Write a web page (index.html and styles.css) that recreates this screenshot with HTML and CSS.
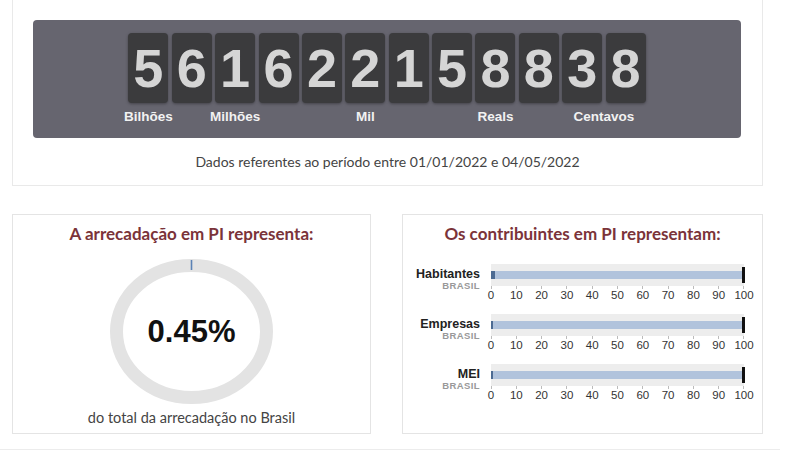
FILE: index.html
```html
<!DOCTYPE html>
<html lang="pt-BR">
<head>
    <meta charset="UTF-8">
    <meta name="viewport" content="width=device-width, initial-scale=1.0">
    <title>Arrecadação em PI</title>
    <link rel="stylesheet" href="styles.css">
</head>
<body>
    <div class="page">
        <section class="summary">
            <div class="counter">
                <div class="group">
                    <div class="tiles"><span class="tile">5</span></div>
                    <span class="unit">Bilhões</span>
                </div>
                <div class="group">
                    <div class="tiles"><span class="tile">6</span><span class="tile">1</span><span class="tile">6</span></div>
                    <span class="unit">Milhões</span>
                </div>
                <div class="group">
                    <div class="tiles"><span class="tile">2</span><span class="tile">2</span><span class="tile">1</span></div>
                    <span class="unit">Mil</span>
                </div>
                <div class="group">
                    <div class="tiles"><span class="tile">5</span><span class="tile">8</span><span class="tile">8</span></div>
                    <span class="unit">Reals</span>
                </div>
                <div class="group">
                    <div class="tiles"><span class="tile">3</span><span class="tile">8</span></div>
                    <span class="unit">Centavos</span>
                </div>
            </div>
            <p class="period">Dados referentes ao período entre 01/01/2022 e 04/05/2022</p>
        </section>

        <div class="cards">
            <section class="card">
                <h2 class="card-title">A arrecadação em PI representa:</h2>
                <div class="donut">
                    <svg class="donut-ring" viewBox="0 0 165 145" preserveAspectRatio="none">
                        <ellipse cx="82.5" cy="72.5" rx="75" ry="66" fill="none" stroke="#e3e3e3" stroke-width="13"/>
                        <line x1="82.5" y1="1" x2="82.5" y2="11" stroke="#5b82b5" stroke-width="1.6"/>
                    </svg>
                    <span class="donut-value">0.45%</span>
                </div>
                <p class="donut-caption">do total da arrecadação no Brasil</p>
            </section>

            <section class="card">
                <h2 class="card-title">Os contribuintes em PI representam:</h2>
                <div class="bullets" id="bullets"></div>
            </section>
        </div>
        <div class="rule"></div>
    </div>

    <script>
        const rows = [
            { nome: 'Habitantes', valor: 1.5 },
            { nome: 'Empresas', valor: 0.8 },
            { nome: 'MEI', valor: 0.8 }
        ];

        const container = document.getElementById('bullets');
        rows.forEach(function(row) {
            let ticks = '';
            for (let i = 0; i <= 100; i += 10) {
                ticks += '<div class="tick"><i></i><span>' + i + '</span></div>';
            }
            container.innerHTML +=
                '<div class="bullet">' +
                    '<div class="bullet-label"><strong>' + row.nome + '</strong><small>BRASIL</small></div>' +
                    '<div class="bullet-chart">' +
                        '<div class="band"><div class="bar"><div class="measure" style="width:' + row.valor + '%"></div></div><div class="target"></div></div>' +
                        '<div class="axis">' + ticks + '</div>' +
                    '</div>' +
                '</div>';
        });
    </script>
</body>
</html>
```

FILE: styles.css
```css
body {
    margin: 0;
    background-color: #fff;
    font-family: Lato, "Open Sans", sans-serif;
    color: #444;
}
.page {
    width: 780px;
}
.summary {
    margin-left: 12px;
    width: 749px;
    border: 1px solid #e9e9e9;
    border-top: none;
    padding-top: 20px;
}
.counter {
    margin: 0 21px 0 20px;
    height: 118px;
    box-sizing: border-box;
    padding-top: 13px;
    background-color: #66656f;
    border-radius: 4px;
    display: flex;
    justify-content: center;
    gap: 3.4px;
}
.group {
    display: flex;
    flex-direction: column;
    align-items: center;
}
.tiles {
    display: flex;
    gap: 3.4px;
}
.tile {
    width: 40px;
    height: 70px;
    background-color: #3b3b3d;
    border-radius: 4px;
    box-shadow: 0 1px 3px rgba(0, 0, 0, 0.35);
    color: #d5d5d5;
    font-family: "Liberation Sans", Arial, sans-serif;
    font-weight: bold;
    font-size: 54px;
    line-height: 70px;
    text-align: center;
}
/* o rótulo pode ser mais largo que o grupo sem afastar os dígitos */
.unit {
    width: 0;
    margin-top: 6px;
    display: flex;
    justify-content: center;
    font-family: "Liberation Sans", Arial, sans-serif;
    font-weight: bold;
    font-size: 13.5px;
    line-height: 16px;
    color: #f2f2f2;
    white-space: nowrap;
}
.period {
    margin: 0;
    height: 47px;
    line-height: 47px;
    text-align: center;
    font-size: 14px;
    color: #444;
}
.cards {
    margin: 28px 0 0 12px;
    width: 751px;
    display: grid;
    grid-template-columns: 359px 361px;
    column-gap: 31px;
}
.card {
    height: 220px;
    box-sizing: border-box;
    border: 1px solid #e4e4e4;
    padding-top: 9px;
}
.card-title {
    margin: 0;
    text-align: center;
    font-size: 17px;
    line-height: 20px;
    font-weight: bold;
    color: #7b3339;
}
.donut {
    margin-top: 15px;
    display: grid;
    justify-content: center;
    align-items: center;
}
.donut-ring,
.donut-value {
    grid-area: 1 / 1;
}
.donut-ring {
    width: 165px;
    height: 145px;
}
.donut-value {
    text-align: center;
    font-family: "Liberation Sans", Arial, sans-serif;
    font-weight: bold;
    font-size: 31px;
    color: #111;
}
.donut-caption {
    margin: 5px 0 0;
    text-align: center;
    font-size: 14.5px;
    line-height: 18px;
    color: #444;
}
.bullets {
    margin-top: 20px;
}
.bullet {
    display: flex;
    height: 50px;
}
.bullet-label {
    width: 77px;
    padding-top: 4px;
    display: flex;
    flex-direction: column;
    align-items: flex-end;
    font-family: "Liberation Sans", Arial, sans-serif;
}
.bullet-label strong {
    font-size: 12.5px;
    line-height: 13px;
    color: #222;
}
.bullet-label small {
    font-size: 9.5px;
    line-height: 10px;
    font-weight: bold;
    letter-spacing: 0.4px;
    color: #999;
}
.bullet-chart {
    margin-left: 11px;
    width: 253px;
}
.band {
    position: relative;
    height: 22px;
    box-sizing: border-box;
    padding-top: 7px;
    background-color: #ededed;
}
.bar {
    height: 8px;
    background-color: #b1c3dc;
}
.measure {
    height: 100%;
    background-color: #4d6b93;
}
.target {
    position: absolute;
    right: -1px;
    top: 3px;
    width: 3px;
    height: 16px;
    background-color: #111;
}
.axis {
    display: flex;
    justify-content: space-between;
}
.tick {
    width: 0;
    display: flex;
    flex-direction: column;
    align-items: center;
}
.tick i {
    width: 1px;
    height: 3px;
    background-color: #bbb;
}
.tick span {
    font-family: "Liberation Sans", Arial, sans-serif;
    font-size: 11.5px;
    line-height: 13px;
    color: #333;
    white-space: nowrap;
}
.rule {
    margin-top: 15px;
    height: 1px;
    background-color: #ececec;
}
```
